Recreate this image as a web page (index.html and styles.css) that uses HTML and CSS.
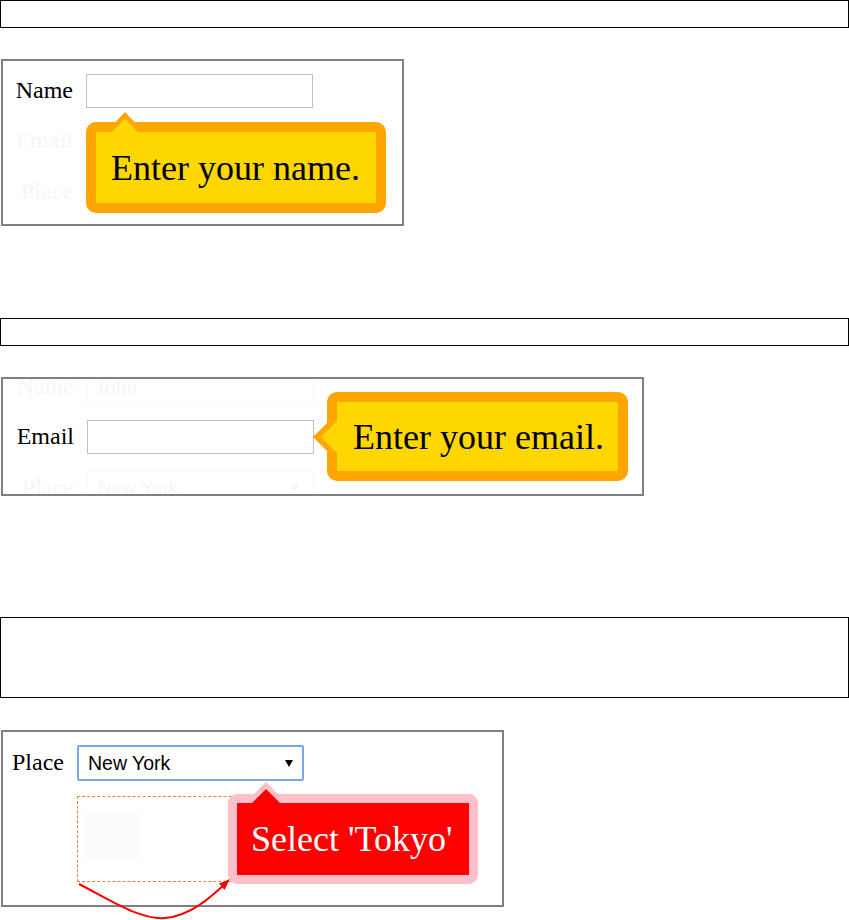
FILE: index.html
```html
<!DOCTYPE html>
<html>
<head>
<meta charset="utf-8">
<link rel="stylesheet" href="styles.css">
</head>
<body>
<div class="bar"></div>

<div class="frame f1">
  <div class="form">
    <div class="row"><span class="lbl">Name</span><span class="inp"></span></div>
    <div class="row ghost"><span class="lbl">Email</span><span class="inp"></span></div>
    <div class="row ghost sel-row"><span class="lbl">Place</span><span class="sel"></span></div>
  </div>
  <div class="tip gold up t1">Enter your name.</div>
</div>

<div class="bar b2"></div>

<div class="frame f2">
  <div class="form">
    <div class="row ghost"><span class="lbl">Name</span><span class="inp"><span class="val">John</span></span></div>
    <div class="row"><span class="lbl">Email</span><span class="inp"></span></div>
    <div class="row ghost sel-row"><span class="lbl">Place</span><span class="sel"><span class="val">New York</span><span class="caret">&#9660;</span></span></div>
  </div>
  <div class="tip gold left t2">Enter your email.</div>
</div>

<div class="bar b3"></div>

<div class="frame f3">
  <div class="row3">
    <span class="lbl3">Place</span>
    <div class="select">
      <span class="sel-text">New York</span>
      <span class="sel-caret"></span>
    </div>
  </div>
  <div class="dropbox"><div class="faint"></div></div>
  <div class="tip red-tip up t3">Select 'Tokyo'</div>
  <svg class="curve" width="170" height="50" viewBox="0 0 170 50">
    <path d="M6,12 C37,28 67,48 92,46 C117,44 137,26 153,11" fill="none" stroke="#ff0000" stroke-width="2"/>
    <polygon points="157,7 146,11.6 151.5,18" fill="#ff0000"/>
  </svg>
</div>
</body>
</html>
```

FILE: styles.css
```css
html, body {
  margin: 0;
  padding: 0;
  background: #ffffff;
}
body {
  font-family: "Liberation Serif", "Times New Roman", serif;
  color: #000;
  display: flex;
  flex-direction: column;
  align-items: flex-start;
  padding-bottom: 14px;
  min-height: 920px;
  box-sizing: border-box;
}
.bar {
  box-sizing: border-box;
  width: 849px;
  height: 28px;
  border: 1px solid #000;
  flex-shrink: 0;
}
.b2 { margin-top: 92px; }
.b3 { margin-top: 121px; height: 81px; }

.frame {
  box-sizing: border-box;
  position: relative;
  margin-left: 1px;
  border: 2px solid #808080;
  background: #fff;
  flex-shrink: 0;
}
.f1 { margin-top: 31px; width: 403px; height: 167px; overflow: hidden; }
.f2 { margin-top: 31px; width: 643px; height: 119px; overflow: hidden; }
.f3 { margin-top: 32px; width: 503px; height: 177px; overflow: visible; }

.form {
  display: flex;
  flex-direction: column;
  gap: 16px;
  padding-top: 13px;
}
.f2 .form { padding-top: 0; margin-top: -9px; padding-left: 1px; }
.row {
  display: flex;
  align-items: center;
  gap: 13px;
  height: 34px;
}
.sel-row { height: 36px; }
.lbl {
  width: 70px;
  text-align: right;
  font-size: 24px;
  line-height: 28px;
  position: relative;
  top: -1px;
}
.inp {
  box-sizing: border-box;
  width: 227px;
  height: 34px;
  border: 1px solid #bfbfbf;
  display: flex;
  align-items: center;
  padding-left: 8px;
  font-size: 22px;
}
.sel {
  box-sizing: border-box;
  width: 227px;
  height: 36px;
  border: 1px solid #bfbfbf;
  display: flex;
  align-items: center;
  justify-content: space-between;
  padding: 0 12px 0 10px;
  font-family: "Liberation Sans", Arial, sans-serif;
  font-size: 19px;
}
.caret { font-size: 12px; }
.ghost .lbl, .ghost .val, .ghost .caret { color: #f6f6f6; }
.ghost .inp, .ghost .sel { border-color: #f8f8f8; }

/* tooltips */
.tip {
  position: absolute;
  box-sizing: border-box;
  border-width: 10px;
  border-style: solid;
  border-radius: 10px;
  font-size: 36px;
  line-height: 36px;
  display: flex;
  align-items: center;
  white-space: nowrap;
  z-index: 2;
}
.gold {
  background: #ffd700;
  border-color: #ffa500;
}
.red-tip {
  background: #ff0000;
  border-color: #ffc0cb;
  color: #fff;
  border-width: 9px;
  border-radius: 9px;
}
.tip::before, .tip::after {
  content: "";
  position: absolute;
  width: 0;
  height: 0;
  border-style: solid;
  border-color: transparent;
}
.t1 { left: 83px; top: 61px; width: 300px; height: 91px; padding-left: 15px; }
.t1::before {
  left: 10px; top: -20px;
  border-width: 0 19px 20px 19px;
  border-bottom-color: #ffa500;
}
.t1::after {
  left: 16px; top: -13px;
  border-width: 0 13px 13px 13px;
  border-bottom-color: #ffd700;
}
.t2 { left: 324px; top: 13px; width: 301px; height: 89px; padding-left: 16px; }
.t2::before {
  left: -24px; top: 11px;
  border-width: 24px 24px 24px 0;
  border-right-color: #ffa500;
}
.t2::after {
  left: -16px; top: 19px;
  border-width: 16px 16px 16px 0;
  border-right-color: #ffd700;
}
.t3 { left: 225px; top: 62px; width: 250px; height: 90px; padding-left: 14px; }
.t3::before {
  left: 8px; top: -21px;
  border-width: 0 21px 21px 21px;
  border-bottom-color: #ffc0cb;
}
.t3::after {
  left: 15px; top: -14px;
  border-width: 0 14px 14px 14px;
  border-bottom-color: #ff0000;
}

/* frame 3 */
.row3 {
  display: flex;
  align-items: center;
  gap: 13px;
  padding: 13px 0 0 9px;
}
.lbl3 {
  font-size: 24px;
  line-height: 28px;
  position: relative;
  top: -1px;
}
.select {
  box-sizing: border-box;
  width: 227px;
  height: 36px;
  border: 2px solid #7aa7ec;
  border-radius: 2px;
  display: flex;
  align-items: center;
  justify-content: space-between;
  padding: 0 9px 0 9px;
  font-family: "Liberation Sans", Arial, sans-serif;
  font-size: 19.5px;
}
.sel-caret {
  width: 0;
  height: 0;
  border-style: solid;
  border-width: 7px 4.5px 0 4.5px;
  border-color: #000 transparent transparent transparent;
  margin-top: 1px;
}
.dropbox {
  box-sizing: border-box;
  margin: 15px 0 0 74px;
  width: 200px;
  height: 86px;
  border: 1px dashed #e8823a;
  padding: 16px 0 0 5px;
}
.faint {
  width: 59px;
  height: 47px;
  background: #fcfcfc;
}
.curve {
  position: absolute;
  left: 70px;
  top: 140px;
  overflow: visible;
  z-index: 3;
}
```
